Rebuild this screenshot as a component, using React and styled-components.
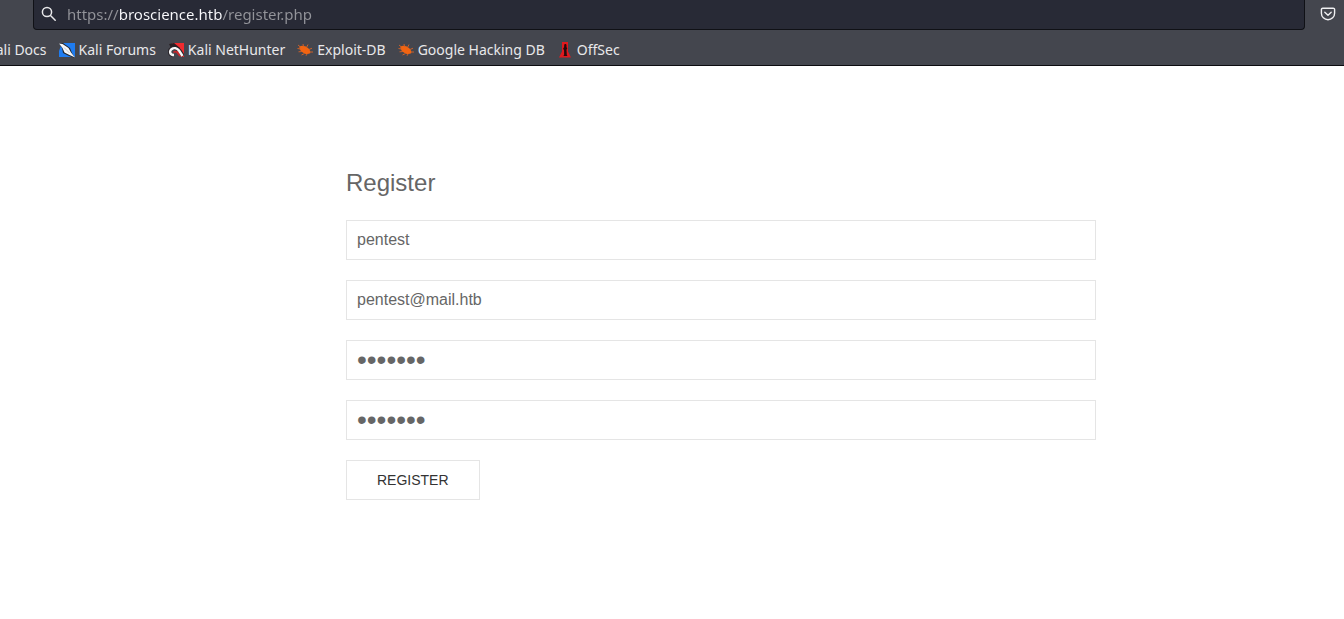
import React from "react";
import styled, { createGlobalStyle } from "styled-components";

const GlobalStyle = createGlobalStyle`
  *, *::before, *::after { box-sizing: border-box; }
  body {
    margin: 0;
    background: #fff;
    color: #666;
    font: 16px/24px "Liberation Sans", Arial, sans-serif;
  }
`;

const Chrome = styled.header`
  background: #44464e;
  border-bottom: 1px solid #0c0c10;
  font-family: "Noto Sans", sans-serif;
  overflow: hidden;
`;

const NavBar = styled.div`
  display: flex;
  align-items: flex-start;
  padding-left: 33px;
`;

const AddressBar = styled.label`
  flex: 1;
  display: flex;
  align-items: center;
  height: 30px;
  padding: 0 7px 2px;
  gap: 10px;
  background: #282a36;
  border: 1px solid #101116;
  border-top: 0;
  border-radius: 0 0 4px 4px;
`;

/* The host name is brighter than the scheme and the path. */
const AddressInput = styled.input`
  flex: 1;
  min-width: 0;
  height: 26px;
  padding: 0;
  border: 0;
  outline: 0;
  font: 15px/26px "Noto Sans", sans-serif;
  color: transparent;
  caret-color: #fff;
  background: linear-gradient(90deg, #93949a 52px, #fbfbfe 52px 155px, #93949a 155px);
  background-clip: text;
  -webkit-background-clip: text;
`;

const PocketButton = styled.button`
  display: flex;
  width: 39px;
  height: 28px;
  padding: 0 0 0 15px;
  align-items: center;
  border: 0;
  background: none;
  color: #f0f0f2;
`;

const Bookmarks = styled.nav`
  display: flex;
  align-items: center;
  height: 35px;
  padding-top: 5px;
  margin-left: -33px;
  gap: 12px;
`;

const Bookmark = styled.a`
  display: flex;
  flex: none;
  align-items: center;
  gap: 4px;
  color: #e8e8ea;
  font-size: 14px;
  line-height: 20px;
  white-space: nowrap;
  text-decoration: none;
`;

const Main = styled.main`
  padding: 100px 0 98px 98px;
`;

const Form = styled.form`
  display: flex;
  flex-direction: column;
  align-items: flex-start;
  gap: 20px;
  max-width: 750px;
  margin: 0 auto;
`;

const Title = styled.h1`
  margin: 0;
  font-size: 24px;
  line-height: 34px;
  font-weight: 400;
`;

const Field = styled.input`
  width: 100%;
  height: 40px;
  padding: 0 10px;
  border: 1px solid #e5e5e5;
  border-radius: 0;
  outline: 0;
  background: #fff;
  color: #666;
  font: 16px "Liberation Sans", Arial, sans-serif;
`;

/* A larger size gives the masked characters heavier dots. */
const PasswordField = styled(Field)`
  font-size: 28px;
`;

const SubmitButton = styled.button`
  height: 40px;
  padding: 0 30px;
  border: 1px solid #e5e5e5;
  background: transparent;
  color: #333;
  font: 14px/38px "Liberation Sans", Arial, sans-serif;
  text-transform: uppercase;
`;

const SearchIcon = () => (
  <svg width="16" height="16" viewBox="0 0 16 16" fill="none" stroke="#e8e8ea" strokeWidth="1.5" strokeLinecap="round">
    <circle cx="6" cy="6" r="4.6" />
    <path d="M9.5 9.5 14.2 14.2" />
  </svg>
);

const PocketIcon = () => (
  <svg width="16" height="16" viewBox="0 0 16 16" fill="none" stroke="currentColor" strokeWidth="1.4" strokeLinecap="round" strokeLinejoin="round">
    <path d="M2.8 2.2h10.4a1.4 1.4 0 0 1 1.4 1.4v3.6a6.6 6.6 0 0 1-13.2 0V3.6a1.4 1.4 0 0 1 1.4-1.4z" />
    <path d="M4.8 6.2 8 9.2l3.2-3" />
  </svg>
);

const ForumsIcon = () => (
  <svg width="16" height="16" viewBox="0 0 16 16">
    <path d="M3 1h13v14H0V9z" fill="#1f7cf0" />
    <path d="M0 1h4l7 5 2 5 3 5-6-2-6-3-1-5z" fill="#23262e" />
    <path d="M0 1.500 3.500 2 9.500 6 12 10.500 16 15.500 10.500 13 5.500 10.500 3.500 6z" fill="#f5f7fa" />
    <path d="M5 5.500 10.500 11" stroke="#aeb4bd" strokeWidth=".7" />
  </svg>
);

const NetHunterIcon = () => (
  <svg width="16" height="16" viewBox="0 0 16 16">
    <path d="M4 1h12v14h-3L5 4z" fill="#ef2b2f" />
    <path d="M1 2 6 1l6 5-3 3-6-3z" fill="#2a2024" />
    <path d="M5.500 13.500C1 13 .5 8.500 3.500 6.500s6.500-.5 8.500 2.500l3.200 5" fill="none" stroke="#29242a" strokeWidth="3.600" />
    <path d="M6 13C2 13 1 9.500 3.500 7.200c2.500-2 5.500-1 7.500 1.300l3.500 5.500" fill="none" stroke="#f7f7f8" strokeWidth="2.400" />
    <path d="M5.500 10.500c1.500-1.500 3-.8 4 .5l2.500 3" fill="none" stroke="#c9262b" strokeWidth="1.600" />
  </svg>
);

const BugIcon = () => (
  <svg width="16" height="16" viewBox="0 0 16 16">
    <path d="M2.500 4.500C5 3 8.500 4 11 6c2 1.700 2.700 3.700 2.200 5.300-2.700 1.300-5.700.8-8.200-1.300C3 8.300 2 6.500 2.500 4.500z" fill="#f26411" />
    <path d="M3.500 5 1 3M3.500 7 .5 6.500M5 9.500l-3.500.3M7.500 11.500 4.500 13M10 12l-1 1.800M6.500 4.500 6 2M9.500 5.500l1.500-3M12 7.500l3-1.300M13 10h3" stroke="#c9602a" strokeWidth="1" />
  </svg>
);

const OffSecIcon = () => (
  <svg width="16" height="16" viewBox="0 0 16 16">
    <path d="M5 0h6v9.500l3 6H2l3-6z" fill="#e0191e" />
    <path d="M7.200 2.500c1-1 2.300-.5 2.300.8v2l.8 1-.8 1.500.3 5.200.7 1H6.300l.8-1V8.500l-1-2 1-1.200z" fill="#26090c" />
  </svg>
);

const bookmarks = [
  { name: "Kali Docs", Icon: ForumsIcon },
  { name: "Kali Forums", Icon: ForumsIcon },
  { name: "Kali NetHunter", Icon: NetHunterIcon },
  { name: "Exploit-DB", Icon: BugIcon },
  { name: "Google Hacking DB", Icon: BugIcon },
  { name: "OffSec", Icon: OffSecIcon },
];

export default function App() {
  return (
    <>
      <GlobalStyle />
      <Chrome>
        <NavBar>
          <AddressBar>
            <SearchIcon />
            <AddressInput aria-label="Address" defaultValue="https://broscience.htb/register.php" spellCheck={false} />
          </AddressBar>
          <PocketButton type="button" aria-label="Save to Pocket">
            <PocketIcon />
          </PocketButton>
        </NavBar>
        <Bookmarks aria-label="Bookmarks">
          {bookmarks.map(({ name, Icon }) => (
            <Bookmark href="#" key={name}>
              <Icon />
              {name}
            </Bookmark>
          ))}
        </Bookmarks>
      </Chrome>
      <Main>
        <Form onSubmit={(e) => e.preventDefault()}>
          <Title>Register</Title>
          <Field type="text" aria-label="Username" defaultValue="pentest" />
          <Field type="email" aria-label="Email" defaultValue="pentest@mail.htb" />
          <PasswordField type="password" aria-label="Password" defaultValue="pentest" />
          <PasswordField type="password" aria-label="Repeat password" defaultValue="pentest" />
          <SubmitButton type="submit">Register</SubmitButton>
        </Form>
      </Main>
    </>
  );
}
